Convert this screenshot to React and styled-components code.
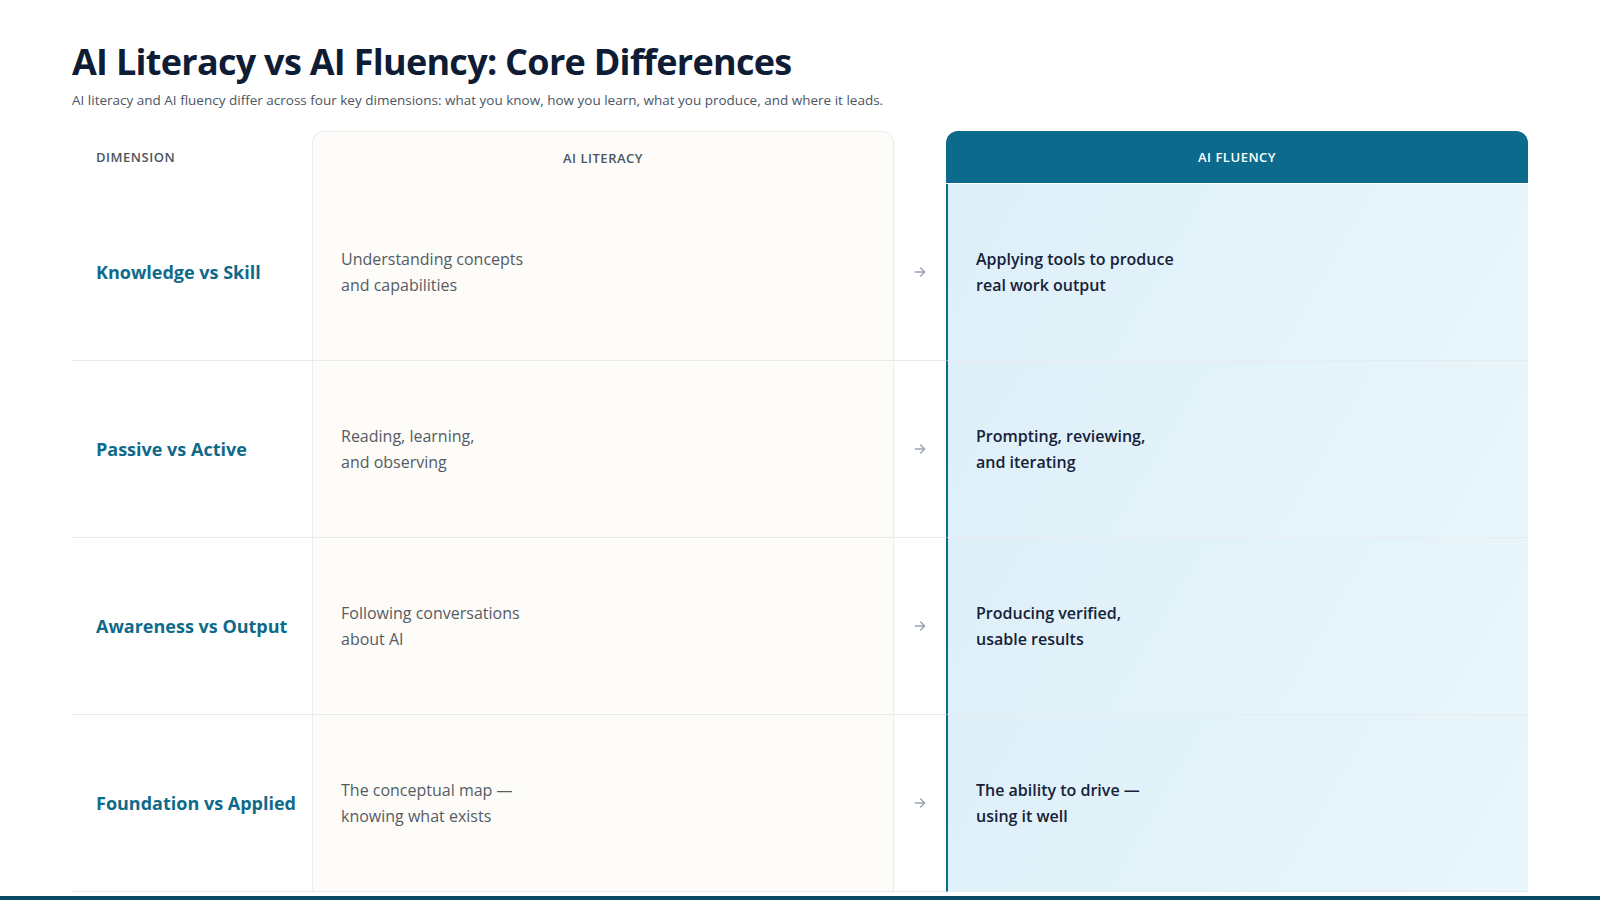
import React from 'react';
import styled, { createGlobalStyle } from 'styled-components';

const Global = createGlobalStyle`
  body {
    margin: 0;
    background: #fff;
    font-family: "Open Sans", "Noto Sans", sans-serif;
    overflow: hidden;
    height: 900px;
  }
`;

const Page = styled.main`
  padding: 40px 72px 0;
`;

const Title = styled.h1`
  margin: 0;
  font-size: 36px;
  font-weight: 700;
  letter-spacing: -0.02em;
  color: #0f1c36;
  line-height: 1.2;
`;

const Lead = styled.p`
  margin: 8px 0 22px;
  font-size: 13.5px;
  color: #4b5563;
`;

const Table = styled.div`
  display: grid;
  grid-template-columns: 240px 582px 52px 582px;
`;

const Head = styled.div`
  height: 52px;
  display: flex;
  align-items: center;
  justify-content: ${p => (p.$left ? 'flex-start' : 'center')};
  padding-left: ${p => (p.$left ? '24px' : '0')};
  font-size: 13px;
  font-weight: 600;
  letter-spacing: 0.04em;
  color: ${p => (p.$fluent ? '#fff' : '#4b5563')};
  background: ${p => (p.$fluent ? '#0c6b8d' : p.$lit ? '#fdfcf8' : 'transparent')};
  border-radius: ${p => (p.$fluent || p.$lit ? '12px 12px 0 0' : '0')};
  border: ${p => (p.$lit ? '1px solid #ececec' : 'none')};
  border-bottom: none;
`;

const Cell = styled.div`
  height: 177px;
  box-sizing: border-box;
  display: flex;
  align-items: center;
  border-bottom: 1px solid #e8ebee;
`;

const Dim = styled(Cell)`
  padding-left: 24px;
  font-size: 18px;
  font-weight: 700;
  color: #0f6a8a;
`;

const Lit = styled(Cell)`
  padding: 0 28px;
  font-size: 16px;
  line-height: 26px;
  color: #555b66;
  background: #fdfcf8;
  border-left: 1px solid #ececec;
  border-right: 1px solid #ececec;
`;

const Arrow = styled(Cell)`
  justify-content: center;
  color: #9aa3b2;
`;

const Flu = styled(Cell)`
  padding: 0 28px;
  font-size: 16px;
  line-height: 26px;
  font-weight: 600;
  color: #16213a;
  background: linear-gradient(120deg, #ddeff8 0%, #e9f6fb 100%);
  border-left: 2px solid #0c6b8d;
`;

const BottomBar = styled.div`
  position: fixed;
  left: 0;
  right: 0;
  bottom: 0;
  height: 4px;
  background: #0b4a66;
`;

const rows = [
  ['Knowledge vs Skill', ['Understanding concepts', 'and capabilities'], ['Applying tools to produce', 'real work output']],
  ['Passive vs Active', ['Reading, learning,', 'and observing'], ['Prompting, reviewing,', 'and iterating']],
  ['Awareness vs Output', ['Following conversations', 'about AI'], ['Producing verified,', 'usable results']],
  ['Foundation vs Applied', ['The conceptual map —', 'knowing what exists'], ['The ability to drive —', 'using it well']],
];

const ArrowIcon = () => (
  <svg width="16" height="16" viewBox="0 0 24 24" fill="none" stroke="currentColor" strokeWidth="2" strokeLinecap="round" strokeLinejoin="round">
    <path d="M5 12h14M13 6l6 6-6 6" />
  </svg>
);

export default function App() {
  return (
    <>
      <Global />
      <Page>
        <Title>AI Literacy vs AI Fluency: Core Differences</Title>
        <Lead>
          AI literacy and AI fluency differ across four key dimensions: what you know, how you learn, what you produce, and where it leads.
        </Lead>
        <Table>
          <Head $left>DIMENSION</Head>
          <Head $lit>AI LITERACY</Head>
          <Head />
          <Head $fluent>AI FLUENCY</Head>
          {rows.map(([d, l, f]) => (
            <React.Fragment key={d}>
              <Dim>{d}</Dim>
              <Lit><div>{l[0]}<br />{l[1]}</div></Lit>
              <Arrow><ArrowIcon /></Arrow>
              <Flu><div>{f[0]}<br />{f[1]}</div></Flu>
            </React.Fragment>
          ))}
        </Table>
      </Page>
      <BottomBar />
    </>
  );
}
